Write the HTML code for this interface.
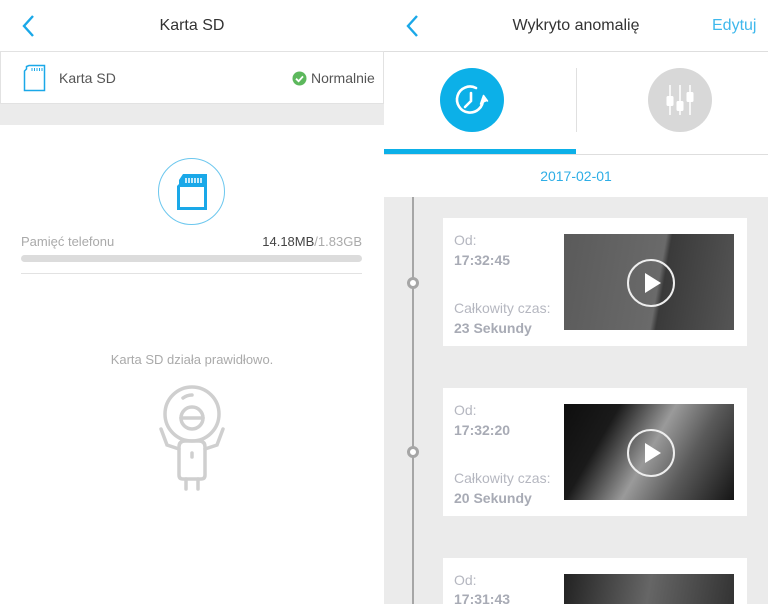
<!DOCTYPE html>
<html><head><meta charset="utf-8"><style>
*{margin:0;padding:0;box-sizing:border-box}
html,body{width:768px;height:604px;overflow:hidden}
body{font-family:"Liberation Sans",sans-serif;background:#fff;position:relative}
.a{position:absolute}
.t{white-space:nowrap}
.card{position:absolute;left:59px;width:304px;height:128px;background:#fff;overflow:hidden}
.card .l1{position:absolute;left:11px;top:14px;font-size:14px;color:#b5b7c0}
.card .l2{position:absolute;left:11px;top:34px;font-size:14px;color:#a8abb5;font-weight:bold}
.card .l3{position:absolute;left:11px;top:82px;font-size:14px;color:#b5b7c0}
.card .l4{position:absolute;left:11px;top:102px;font-size:14px;color:#a8abb5;font-weight:bold}
.thumb{position:absolute;left:121px;top:16px;width:170px;height:96px;overflow:hidden}
.dot{position:absolute;left:23px;width:12px;height:12px;border:3px solid #a6a6a6;border-radius:50%;background:#fff}
.play{position:absolute;left:62px;top:24px}
</style></head><body>
<!-- LEFT -->
<svg class="a" style="left:20px;top:14px" width="16" height="24"><path d="M13 2 L4 12 L13 22" fill="none" stroke="#1aa8e8" stroke-width="2.4"/></svg>
<div class="a t" style="left:0;width:384px;top:17px;text-align:center;font-size:16px;color:#333">Karta SD</div>
<div class="a" style="left:0;top:51px;width:384px;height:53px;border:1px solid #e2e2e2;background:#fff"></div>
<svg class="a" style="left:23px;top:64px" width="24" height="28"><path d="M6 1.5 H21.5 V26.5 H1.5 V7 L3.5 5 V2.5 Z" fill="none" stroke="#1aa8e8" stroke-width="1.5"/><path d="M9 4v3M11.5 4v3M14 4v3M16.5 4v3M19 4v3" stroke="#1aa8e8" stroke-width="1"/></svg>
<div class="a t" style="left:59px;top:70px;font-size:14px;color:#555">Karta SD</div>
<svg class="a" style="left:292px;top:71px" width="15" height="15"><circle cx="7.5" cy="7.5" r="7" fill="#5cb85c"/><path d="M4 7.7 L6.6 10.2 L11 5.4" fill="none" stroke="#fff" stroke-width="1.8"/></svg>
<div class="a t" style="left:311px;top:70px;font-size:14px;color:#555">Normalnie</div>
<div class="a" style="left:0;top:104px;width:384px;height:21px;background:#ebebeb"></div>
<div class="a" style="left:158px;top:158px;width:67px;height:67px;border:1.5px solid #6cc7ee;border-radius:50%"></div>
<svg class="a" style="left:175px;top:172px" width="34" height="40"><path d="M8 2 H32 V38 H2 V14 L4 12 V8 Z" fill="#1aa8e8"/><rect x="5" y="15" width="24" height="20" fill="#fff"/><path d="M11 6v5M14 6v5M17 6v5M20 6v5M23 6v5M26 6v5" stroke="#fff" stroke-width="1.5"/></svg>
<div class="a t" style="left:21px;top:234px;font-size:13px;color:#aaa">Pamięć telefonu</div>
<div class="a t" style="left:200px;width:162px;text-align:right;top:234px;font-size:13px;color:#444">14.18MB<span style="color:#aaa">/1.83GB</span></div>
<div class="a" style="left:21px;top:255px;width:341px;height:7px;background:#dcdcdc;border-radius:4px"></div>
<div class="a" style="left:21px;top:273px;width:341px;height:1px;background:#e2e2e2"></div>
<div class="a t" style="left:0;width:384px;text-align:center;top:352px;font-size:13px;color:#aaa">Karta SD działa prawidłowo.</div>
<svg class="a" style="left:155px;top:385px" width="75" height="110" fill="none" stroke="#cfcfcf" stroke-width="3.5" stroke-linecap="round">
<circle cx="37" cy="29" r="27"/><path d="M28 13 Q32 10 37 10"/><circle cx="37" cy="33" r="11"/><path d="M26 33 H48"/>
<path d="M6 44 L12 60 L24 64"/><path d="M68 44 L62 60 L50 64"/>
<path d="M24 62 Q24 56 30 56 H44 Q50 56 50 62 V90 Q50 94 46 94 H28 Q24 94 24 90 Z"/><path d="M37 68v4"/>
<path d="M31 94v10M43 94v10"/></svg>
<!-- RIGHT -->
<div class="a" style="left:384px;top:0;width:384px;height:604px;background:#ebebeb;overflow:hidden">
<div class="a" style="left:0;top:0;width:384px;height:197px;background:#fff"></div>
<svg class="a" style="left:20px;top:14px" width="16" height="24"><path d="M13 2 L4 12 L13 22" fill="none" stroke="#1aa8e8" stroke-width="2.4"/></svg>
<div class="a t" style="left:0;width:384px;top:17px;text-align:center;font-size:16px;color:#333">Wykryto anomalię</div>
<div class="a t" style="left:328px;top:17px;font-size:16px;color:#3fb8ec">Edytuj</div>
<div class="a" style="left:0;top:51px;width:384px;height:1px;background:#dedede"></div>
<div class="a" style="left:192px;top:68px;width:1px;height:64px;background:#e0e0e0"></div>
<div class="a" style="left:56px;top:68px;width:64px;height:64px;border-radius:50%;background:#0cb0e8"></div>
<svg class="a" style="left:56px;top:68px" width="64" height="64" fill="none" stroke="#fff" stroke-width="2.6" stroke-linecap="round"><path d="M43 31 A13 13 0 1 1 36 20"/><path d="M31 25 V33 L25 39"/><path d="M40.5 36 L43.5 27.5 L47.5 33" fill="#fff" stroke-width="1.5" stroke-linejoin="round"/></svg>
<div class="a" style="left:264px;top:68px;width:64px;height:64px;border-radius:50%;background:#d8d8d8"></div>
<svg class="a" style="left:264px;top:68px" width="64" height="64"><path d="M22 17v30M32 17v30M42 17v30" stroke="#fff" stroke-width="1.5"/><rect x="18.5" y="28" width="7" height="10" rx="1.5" fill="#fff"/><rect x="28.5" y="33" width="7" height="10" rx="1.5" fill="#fff"/><rect x="38.5" y="24" width="7" height="10" rx="1.5" fill="#fff"/></svg>
<div class="a" style="left:0;top:149px;width:192px;height:5px;background:#0cb0e8"></div>
<div class="a" style="left:0;top:154px;width:384px;height:1px;background:#dedede"></div>
<div class="a t" style="left:0;width:384px;top:168px;text-align:center;font-size:14px;color:#2eaee6">2017-02-01</div>
<div class="a" style="left:28px;top:197px;width:2px;height:407px;background:#a6a6a6"></div>
<div class="dot" style="top:277px"></div>
<div class="dot" style="top:446px"></div>
<div class="card" style="top:218px"><div class="l1">Od:</div><div class="l2">17:32:45</div><div class="l3">Całkowity czas:</div><div class="l4">23 Sekundy</div>
<div class="thumb" style="background:linear-gradient(100deg,#5a5a5a 0%,#6a6a6a 55%,#3a3a3a 58%,#555 100%)"><svg class="play" width="50" height="50"><circle cx="25" cy="25" r="23" fill="none" stroke="#eee" stroke-width="2"/><path d="M19 15 L35 25 L19 35Z" fill="#fff"/></svg></div></div>
<div class="card" style="top:388px"><div class="l1">Od:</div><div class="l2">17:32:20</div><div class="l3">Całkowity czas:</div><div class="l4">20 Sekundy</div>
<div class="thumb" style="background:linear-gradient(120deg,#0e0e0e 0%,#1a1a1a 25%,#9a9a9a 50%,#5a5a5a 70%,#151515 100%)"><svg class="play" width="50" height="50"><circle cx="25" cy="25" r="23" fill="none" stroke="#eee" stroke-width="2"/><path d="M19 15 L35 25 L19 35Z" fill="#fff"/></svg></div></div>
<div class="card" style="top:558px;height:46px"><div class="l1">Od:</div><div class="l2" style="top:33px">17:31:43</div>
<div class="thumb" style="height:30px;background:linear-gradient(100deg,#222 0%,#666 50%,#333 100%)"></div></div>
</div>
</body></html>
